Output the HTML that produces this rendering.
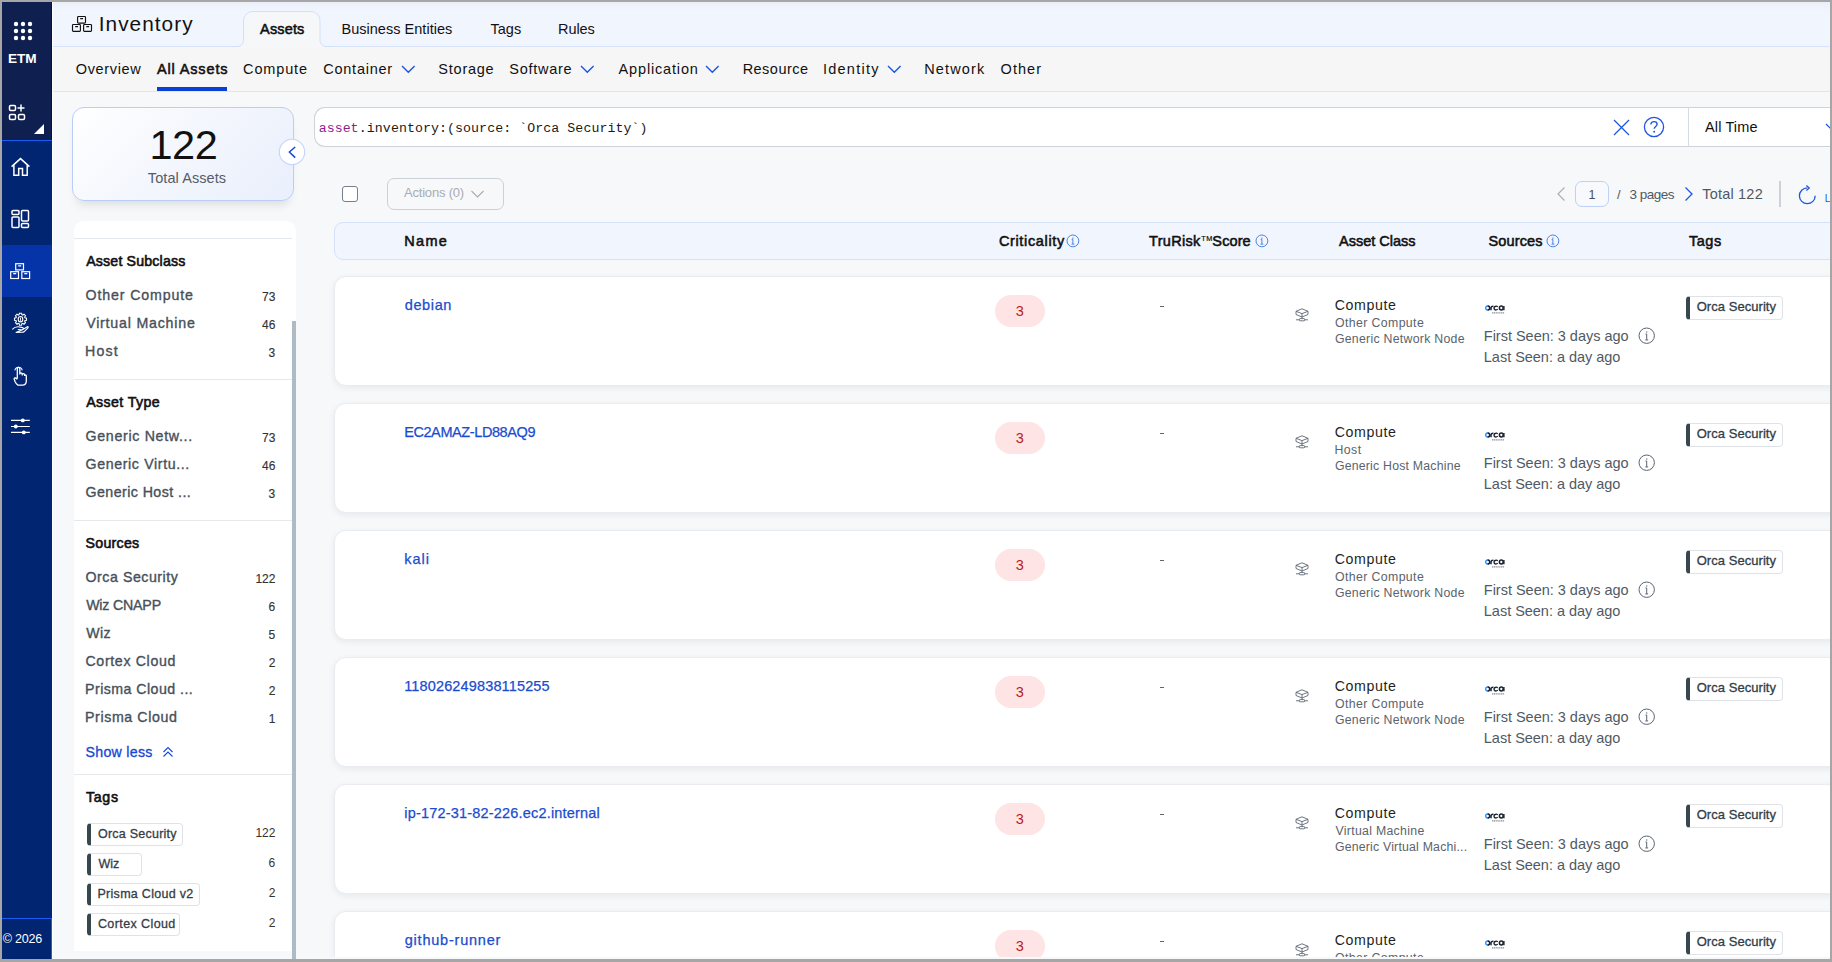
<!DOCTYPE html>
<html><head><meta charset="utf-8">
<style>
*{box-sizing:border-box;margin:0;padding:0}
html,body{width:1832px;height:962px;overflow:hidden}
body{background:#a6a6a6;font-family:"Liberation Sans",sans-serif;position:relative;color:#1a1a1a}
.a{position:absolute}
.t{position:absolute;white-space:nowrap;line-height:1}
svg{position:absolute;overflow:visible}
</style></head><body>
<div class="a" style="left:2px;top:2px;width:50px;height:957px;background:#012571"></div><div class="a" style="left:2px;top:2px;width:50px;height:138px;background:#0f1f4f"></div><div class="a" style="left:51px;top:2px;width:1px;height:138px;background:#001040"></div><div class="a" style="left:2px;top:140px;width:50px;height:1px;background:#1b5cf5"></div><div class="a" style="left:2px;top:245px;width:50px;height:52px;background:#0533a8"></div><div class="a" style="left:2px;top:918px;width:50px;height:1px;background:#1b5cf5"></div><div class="a" style="left:51px;top:918px;width:1px;height:41px;background:#1b5cf5"></div><div class="t" style="left:7.92px;top:52.49px;font-size:13.60px;color:#fff;font-weight:bold;letter-spacing:0.036px;">ETM</div><div class="t" style="left:2.81px;top:933.22px;font-size:12.50px;color:#fff;letter-spacing:-0.203px;">© 2026</div><svg style="left:0;top:0" width="52" height="960">
 <g fill="#fff">
  <circle cx="16" cy="24" r="2.2"/><circle cx="23" cy="24" r="2.2"/><circle cx="30" cy="24" r="2.2"/>
  <circle cx="16" cy="31" r="2.2"/><circle cx="23" cy="31" r="2.2"/><circle cx="30" cy="31" r="2.2"/>
  <circle cx="16" cy="38" r="2.2"/><circle cx="23" cy="38" r="2.2"/><circle cx="30" cy="38" r="2.2"/>
  <path d="M34 134 L44 124 L44 134 Z"/>
 </g>
 <g fill="none" stroke="#fff" stroke-width="1.5">
  <rect x="9.5" y="105.5" width="6" height="5" rx="1.2"/>
  <path d="M21 104.5 v7 M17.5 108 h7"/>
  <rect x="9.5" y="114.5" width="6" height="5" rx="1.2"/>
  <rect x="18.5" y="114.5" width="6" height="5" rx="1.2"/>
  <path d="M11.6 166.6 L20.5 158.6 L29.4 166.6 M13.9 164.6 V175.3 H18.7 V168.4 H22.5 V175.3 H27.2 V164.6"/>
  <rect x="12" y="210.5" width="7" height="4" rx="1"/>
  <rect x="12" y="217" width="7" height="10.5" rx="1"/>
  <rect x="21.5" y="210.5" width="7" height="10.5" rx="1"/>
  <rect x="21.5" y="223.5" width="7" height="4" rx="1"/>
  <rect x="15.7" y="263.7" width="7.8" height="6.2" stroke-width="1.2"/>
  <rect x="10.7" y="271.7" width="7.8" height="6.8" stroke-width="1.2"/>
  <rect x="21.8" y="271.7" width="7.8" height="6.8" stroke-width="1.2"/>
  <path d="M18.2 265.8 h3 M13.2 273.7 h3 M24.3 273.7 h3" stroke-width="1.2"/>
 </g>
</svg><div class="a" style="left:52px;top:2px;width:1px;height:957px;background:#fff"></div><div class="a" style="left:53px;top:2px;width:1777px;height:957px;background:#f6f8fa"></div><div class="a" style="left:53px;top:2px;width:1777px;height:44px;background:linear-gradient(#e9eef8 0px,#eef2fb 4px,#f1f5fe 10px)"></div><div class="a" style="left:53px;top:46px;width:1777px;height:1px;background:#d8e4fc"></div><div class="a" style="left:53px;top:47px;width:1777px;height:44px;background:#f6f6f6"></div><div class="a" style="left:53px;top:91px;width:1777px;height:1px;background:#e3e6e9"></div><svg style="left:0;top:0" width="340" height="50"><path d="M236 46.6 A6 6 0 0 0 243.5 40.5 V20.5 A9 9 0 0 1 252.5 11.5 H311 A9 9 0 0 1 320 20.5 V40.5 A6 6 0 0 0 327.5 46.6 V48 H236 Z" fill="#f6f7f9"/><path d="M232 46.5 H237.5 A6 6 0 0 0 243.5 40.5 V20.5 A9 9 0 0 1 252.5 11.5 H311 A9 9 0 0 1 320 20.5 V40.5 A6 6 0 0 0 326 46.5 H332" fill="none" stroke="#d3e0fb" stroke-width="1"/></svg><div class="t" style="left:98.73px;top:13.59px;font-size:20.80px;color:#111;letter-spacing:1.035px;">Inventory</div><div class="t" style="left:260.10px;top:21.83px;font-size:14.50px;color:#111;letter-spacing:0.142px;-webkit-text-stroke:0.55px #111;">Assets</div><div class="t" style="left:341.44px;top:21.83px;font-size:14.50px;color:#111;letter-spacing:0.028px;">Business Entities</div><div class="t" style="left:490.41px;top:21.83px;font-size:14.50px;color:#111;letter-spacing:0.034px;">Tags</div><div class="t" style="left:558.04px;top:21.83px;font-size:14.50px;color:#111;letter-spacing:-0.095px;">Rules</div><div class="t" style="left:75.75px;top:61.83px;font-size:14.50px;color:#111;letter-spacing:0.655px;">Overview</div><div class="t" style="left:157.00px;top:61.83px;font-size:14.50px;color:#111;letter-spacing:0.850px;-webkit-text-stroke:0.55px #111;">All Assets</div><div class="t" style="left:243.08px;top:61.83px;font-size:14.50px;color:#111;letter-spacing:0.847px;">Compute</div><div class="t" style="left:323.27px;top:61.83px;font-size:14.50px;color:#111;letter-spacing:0.748px;">Container</div><div class="t" style="left:438.35px;top:61.83px;font-size:14.50px;color:#111;letter-spacing:0.759px;">Storage</div><div class="t" style="left:509.35px;top:61.83px;font-size:14.50px;color:#111;letter-spacing:0.729px;">Software</div><div class="t" style="left:618.60px;top:61.83px;font-size:14.50px;color:#111;letter-spacing:0.834px;">Application</div><div class="t" style="left:742.64px;top:61.83px;font-size:14.50px;color:#111;letter-spacing:0.479px;">Resource</div><div class="t" style="left:823.00px;top:61.83px;font-size:14.50px;color:#111;letter-spacing:1.235px;">Identity</div><div class="t" style="left:924.14px;top:61.83px;font-size:14.50px;color:#111;letter-spacing:1.157px;">Network</div><div class="t" style="left:1000.55px;top:61.83px;font-size:14.50px;color:#111;letter-spacing:1.055px;">Other</div><div class="a" style="left:157px;top:87px;width:70px;height:4px;background:#0a3fd6"></div><div class="a" style="left:72px;top:107px;width:222px;height:94px;border:1px solid #b9cdf8;border-radius:12px;background:linear-gradient(135deg,#ffffff 0%,#f3f6fd 50%,#e9effc 100%);box-shadow:0 8px 10px -4px rgba(0,0,0,0.10)"></div><div class="t" style="left:149.39px;top:123.57px;font-size:41.50px;color:#111;letter-spacing:-0.355px;">122</div><div class="t" style="left:147.81px;top:170.53px;font-size:14.50px;color:#555c66;letter-spacing:0.085px;">Total Assets</div><svg style="left:278.8px;top:138.8px" width="26" height="26"><circle cx="13" cy="13" r="12.7" fill="#fff" stroke="#c2d5fc" stroke-width="1.1"/><path d="M16.2 8 L10.4 13 L16.2 18.6" fill="none" stroke="#1747d6" stroke-width="1.5"/></svg><div class="a" style="left:74px;top:221px;width:222px;height:730px;background:#fff;border-radius:10px 10px 0 0"></div><div class="a" style="left:74px;top:238px;width:218px;height:1px;background:#e3e8ef"></div><div class="a" style="left:292px;top:321px;width:4px;height:638px;background:#aebbc5"></div><div class="t" style="left:86.20px;top:253.68px;font-size:14.20px;color:#111;letter-spacing:0.165px;-webkit-text-stroke:0.6px #111;">Asset Subclass</div><div class="t" style="left:85.56px;top:287.68px;font-size:14.20px;color:#47505a;letter-spacing:0.860px;-webkit-text-stroke:0.35px #47505a;">Other Compute</div><div class="t" style="left:261.96px;top:290.54px;font-size:12.00px;color:#333;-webkit-text-stroke:0.15px #333;">73</div><div class="t" style="left:86.13px;top:315.78px;font-size:14.20px;color:#47505a;letter-spacing:0.799px;-webkit-text-stroke:0.35px #47505a;">Virtual Machine</div><div class="t" style="left:261.96px;top:318.64px;font-size:12.00px;color:#333;-webkit-text-stroke:0.15px #333;">46</div><div class="t" style="left:85.06px;top:343.98px;font-size:14.20px;color:#47505a;letter-spacing:1.175px;-webkit-text-stroke:0.35px #47505a;">Host</div><div class="t" style="left:268.62px;top:346.84px;font-size:12.00px;color:#333;-webkit-text-stroke:0.15px #333;">3</div><div class="a" style="left:74px;top:379px;width:218px;height:1px;background:#e6e8eb"></div><div class="t" style="left:86.20px;top:395.28px;font-size:14.20px;color:#111;letter-spacing:0.404px;-webkit-text-stroke:0.6px #111;">Asset Type</div><div class="t" style="left:85.49px;top:429.28px;font-size:14.20px;color:#47505a;letter-spacing:0.695px;-webkit-text-stroke:0.35px #47505a;">Generic Netw...</div><div class="t" style="left:261.96px;top:432.14px;font-size:12.00px;color:#333;-webkit-text-stroke:0.15px #333;">73</div><div class="t" style="left:85.49px;top:457.28px;font-size:14.20px;color:#47505a;letter-spacing:0.631px;-webkit-text-stroke:0.35px #47505a;">Generic Virtu...</div><div class="t" style="left:261.96px;top:460.14px;font-size:12.00px;color:#333;-webkit-text-stroke:0.15px #333;">46</div><div class="t" style="left:85.49px;top:485.28px;font-size:14.20px;color:#47505a;letter-spacing:0.445px;-webkit-text-stroke:0.35px #47505a;">Generic Host ...</div><div class="t" style="left:268.62px;top:488.14px;font-size:12.00px;color:#333;-webkit-text-stroke:0.15px #333;">3</div><div class="a" style="left:74px;top:520px;width:218px;height:1px;background:#e6e8eb"></div><div class="t" style="left:85.56px;top:535.58px;font-size:14.20px;color:#111;letter-spacing:0.254px;-webkit-text-stroke:0.6px #111;">Sources</div><div class="t" style="left:85.56px;top:569.98px;font-size:14.20px;color:#47505a;letter-spacing:0.530px;-webkit-text-stroke:0.35px #47505a;">Orca Security</div><div class="t" style="left:255.42px;top:572.84px;font-size:12.00px;color:#333;-webkit-text-stroke:0.15px #333;">122</div><div class="t" style="left:86.13px;top:597.98px;font-size:14.20px;color:#47505a;letter-spacing:-0.186px;-webkit-text-stroke:0.35px #47505a;">Wiz CNAPP</div><div class="t" style="left:268.62px;top:600.84px;font-size:12.00px;color:#333;-webkit-text-stroke:0.15px #333;">6</div><div class="t" style="left:86.13px;top:625.98px;font-size:14.20px;color:#47505a;letter-spacing:0.469px;-webkit-text-stroke:0.35px #47505a;">Wiz</div><div class="t" style="left:268.62px;top:628.84px;font-size:12.00px;color:#333;-webkit-text-stroke:0.15px #333;">5</div><div class="t" style="left:85.49px;top:653.98px;font-size:14.20px;color:#47505a;letter-spacing:0.643px;-webkit-text-stroke:0.35px #47505a;">Cortex Cloud</div><div class="t" style="left:268.74px;top:656.84px;font-size:12.00px;color:#333;-webkit-text-stroke:0.15px #333;">2</div><div class="t" style="left:85.06px;top:681.98px;font-size:14.20px;color:#47505a;letter-spacing:0.450px;-webkit-text-stroke:0.35px #47505a;">Prisma Cloud ...</div><div class="t" style="left:268.74px;top:684.84px;font-size:12.00px;color:#333;-webkit-text-stroke:0.15px #333;">2</div><div class="t" style="left:85.06px;top:709.98px;font-size:14.20px;color:#47505a;letter-spacing:0.605px;-webkit-text-stroke:0.35px #47505a;">Prisma Cloud</div><div class="t" style="left:268.68px;top:712.84px;font-size:12.00px;color:#333;-webkit-text-stroke:0.15px #333;">1</div><div class="t" style="left:85.56px;top:745.08px;font-size:14.20px;color:#1747d6;letter-spacing:0.273px;-webkit-text-stroke:0.3px #1747d6;">Show less</div><svg style="left:162px;top:746px" width="12" height="12"><path d="M1.5 6 L6 1.5 L10.5 6 M1.5 10.5 L6 6 L10.5 10.5" fill="none" stroke="#1747d6" stroke-width="1.1"/></svg><div class="a" style="left:74px;top:774px;width:218px;height:1px;background:#e6e8eb"></div><div class="t" style="left:85.92px;top:790.28px;font-size:14.20px;color:#111;letter-spacing:0.740px;-webkit-text-stroke:0.6px #111;">Tags</div><div class="a" style="left:86.8px;top:823px;width:96.2px;height:23px;background:#fff;border:1px solid #dfe3e8;border-left:4px solid #37474f;border-radius:4px"></div><div class="t" style="left:97.94px;top:827.62px;font-size:12.50px;color:#333d47;letter-spacing:0.240px;-webkit-text-stroke:0.3px #333d47;">Orca Security</div><div class="t" style="left:255.42px;top:826.84px;font-size:12.00px;color:#333;">122</div><div class="a" style="left:86.8px;top:853px;width:55.500000000000014px;height:23px;background:#fff;border:1px solid #dfe3e8;border-left:4px solid #37474f;border-radius:4px"></div><div class="t" style="left:98.44px;top:857.62px;font-size:12.50px;color:#333d47;letter-spacing:-0.062px;-webkit-text-stroke:0.3px #333d47;">Wiz</div><div class="t" style="left:268.62px;top:856.84px;font-size:12.00px;color:#333;">6</div><div class="a" style="left:86.8px;top:883px;width:112.8px;height:23px;background:#fff;border:1px solid #dfe3e8;border-left:4px solid #37474f;border-radius:4px"></div><div class="t" style="left:97.50px;top:887.62px;font-size:12.50px;color:#333d47;letter-spacing:0.281px;-webkit-text-stroke:0.3px #333d47;">Prisma Cloud v2</div><div class="t" style="left:268.74px;top:886.84px;font-size:12.00px;color:#333;">2</div><div class="a" style="left:86.8px;top:913px;width:93.7px;height:23px;background:#fff;border:1px solid #dfe3e8;border-left:4px solid #37474f;border-radius:4px"></div><div class="t" style="left:97.88px;top:917.62px;font-size:12.50px;color:#333d47;letter-spacing:0.409px;-webkit-text-stroke:0.3px #333d47;">Cortex Cloud</div><div class="t" style="left:268.74px;top:916.84px;font-size:12.00px;color:#333;">2</div><div class="a" style="left:314px;top:107px;width:1530px;height:40px;background:#fff;border:1px solid #cdd3da;border-right:none;border-radius:11px 0 0 11px"></div><div class="a" style="left:1688px;top:108px;width:1px;height:38px;background:#d6dbe1"></div><div class="t" style="left:318.81px;top:122.14px;font-size:13.25px;color:#8a1d8f;font-family:'Liberation Mono', monospace;">asset</div><div class="t" style="left:358.80px;top:122.14px;font-size:13.25px;color:#1a1a1a;font-family:'Liberation Mono',monospace;letter-spacing:0.070px">.inventory:(source: `Orca Security`)</div><svg style="left:1613px;top:119px" width="17" height="17"><path d="M1 1 L16 16 M16 1 L1 16" stroke="#1f55e0" stroke-width="1.3" fill="none"/></svg><svg style="left:1643px;top:116px" width="22" height="22"><circle cx="11" cy="11" r="9.6" fill="none" stroke="#1f55e0" stroke-width="1.3"/><path d="M7.9 8.6 C7.9 6.6 9.3 5.6 11 5.6 C12.8 5.6 14.1 6.7 14.1 8.3 C14.1 10.3 11.2 10.6 11.2 12.8" fill="none" stroke="#1f55e0" stroke-width="1.4"/><circle cx="11.2" cy="15.8" r="0.95" fill="#1f55e0"/></svg><div class="t" style="left:1705.00px;top:119.63px;font-size:14.50px;color:#111;letter-spacing:0.129px;">All Time</div><svg style="left:1825px;top:122px" width="12" height="10"><path d="M1 2 L6 7 L11 2" stroke="#1f55e0" stroke-width="1.2" fill="none"/></svg><div class="a" style="left:342px;top:186px;width:16px;height:16px;background:#fff;border:1px solid #74808d;border-radius:3px"></div><div class="a" style="left:387px;top:178px;width:117px;height:32px;border:1px solid #cad1d9;border-radius:7px;background:#f7f8fa"></div><div class="t" style="left:404.00px;top:186.20px;font-size:13.00px;color:#a6adb5;letter-spacing:-0.200px;">Actions (0)</div><svg style="left:470px;top:189px" width="16" height="10"><path d="M1.5 2 L7.5 8 L13.5 2" stroke="#a3adb7" stroke-width="1.1" fill="none"/></svg><svg style="left:1554px;top:186px" width="14" height="16"><path d="M10.5 1.5 L4 8 L10.5 14.5" stroke="#a9b0b8" stroke-width="1.2" fill="none"/></svg><div class="a" style="left:1575px;top:181px;width:34px;height:26px;border:1px solid #bcd0f8;border-radius:7px;background:#f7f9fd"></div><div class="t" style="left:1588.56px;top:188.52px;font-size:12.50px;color:#4a4f55;">1</div><div class="t" style="left:1617.00px;top:188.10px;font-size:13.00px;color:#555;">/</div><div class="t" style="left:1629.46px;top:187.67px;font-size:13.50px;color:#4f5863;letter-spacing:-0.508px;">3 pages</div><svg style="left:1682px;top:186px" width="14" height="16"><path d="M3.5 1.5 L10 8 L3.5 14.5" stroke="#1f55e0" stroke-width="1.3" fill="none"/></svg><div class="t" style="left:1702.31px;top:186.83px;font-size:14.50px;color:#4f5863;letter-spacing:0.193px;">Total 122</div><div class="a" style="left:1779px;top:181px;width:2px;height:26px;background:#ccd2d9"></div><svg style="left:1797px;top:185px" width="22" height="22"><path d="M18.2 10.8 A7.9 7.9 0 1 1 10.3 2.9" fill="none" stroke="#1f55e0" stroke-width="1.3"/><path d="M9.4 0.4 L12.2 3 L9.4 5.6" fill="none" stroke="#1f55e0" stroke-width="1.3"/></svg><div class="t" style="left:1824.70px;top:193.73px;font-size:10.00px;color:#1f55e0;">L</div><div class="a" style="left:334px;top:222px;width:1600px;height:38px;background:#f1f5fd;border:1px solid #d6e2fb;border-radius:9px"></div><div class="t" style="left:404.34px;top:233.63px;font-size:14.50px;color:#111;letter-spacing:1.257px;-webkit-text-stroke:0.55px #111;">Name</div><div class="t" style="left:998.88px;top:233.73px;font-size:14.50px;color:#111;letter-spacing:0.653px;-webkit-text-stroke:0.55px #111;">Criticality</div><div class="t" style="left:1149.01px;top:233.73px;font-size:14.50px;color:#111;letter-spacing:0.320px;-webkit-text-stroke:0.55px #111;">TruRisk</div><div class="t" style="left:1201.35px;top:235.22px;font-size:7.30px;color:#111;letter-spacing:0.518px;-webkit-text-stroke:0.2px #111;">TM</div><div class="t" style="left:1212.35px;top:233.73px;font-size:14.50px;color:#111;letter-spacing:0.115px;-webkit-text-stroke:0.55px #111;">Score</div><div class="t" style="left:1339.00px;top:233.73px;font-size:14.50px;color:#111;-webkit-text-stroke:0.55px #111;">Asset Class</div><div class="t" style="left:1488.55px;top:233.73px;font-size:14.50px;color:#111;letter-spacing:0.124px;-webkit-text-stroke:0.55px #111;">Sources</div><div class="t" style="left:1689.11px;top:233.73px;font-size:14.50px;color:#111;letter-spacing:0.467px;-webkit-text-stroke:0.55px #111;">Tags</div><svg style="left:1065.1px;top:232.8px" width="15" height="15"><circle cx="7.9" cy="7.9" r="5.9" fill="none" stroke="#3a78e0" stroke-width="0.9"/><rect x="7.30" y="4.65" width="1.20" height="1.10" fill="#3a78e0"/><path d="M6.70 6.60 h1.20 v4.43 M6.50 11.15 h2.80" stroke="#3a78e0" stroke-width="0.90" fill="none"/></svg><svg style="left:1253.6px;top:232.8px" width="15" height="15"><circle cx="7.9" cy="7.9" r="5.9" fill="none" stroke="#3a78e0" stroke-width="0.9"/><rect x="7.30" y="4.65" width="1.20" height="1.10" fill="#3a78e0"/><path d="M6.70 6.60 h1.20 v4.43 M6.50 11.15 h2.80" stroke="#3a78e0" stroke-width="0.90" fill="none"/></svg><svg style="left:1545.1px;top:232.8px" width="15" height="15"><circle cx="7.9" cy="7.9" r="5.9" fill="none" stroke="#3a78e0" stroke-width="0.9"/><rect x="7.30" y="4.65" width="1.20" height="1.10" fill="#3a78e0"/><path d="M6.70 6.60 h1.20 v4.43 M6.50 11.15 h2.80" stroke="#3a78e0" stroke-width="0.90" fill="none"/></svg><svg style="left:0;top:0" width="100" height="40"><g fill="none" stroke="#111" stroke-width="1.15"><rect x="77.6" y="16.5" width="7.9" height="6.6" rx="0.8"/><rect x="72.5" y="24.5" width="7.9" height="6.9" rx="0.8"/><rect x="83.6" y="24.5" width="7.9" height="6.9" rx="0.8"/><path d="M80.2 18.6 h2.8 M75.2 26.6 h2.8 M86.3 26.6 h2.8"/></g></svg><svg style="left:400.5px;top:62px" width="16" height="14"><path d="M1 4 L7.3 10.3 L13.6 4" fill="none" stroke="#1c55e8" stroke-width="1.4"/></svg><svg style="left:580.0px;top:62px" width="16" height="14"><path d="M1 4 L7.3 10.3 L13.6 4" fill="none" stroke="#1c55e8" stroke-width="1.4"/></svg><svg style="left:705.4px;top:62px" width="16" height="14"><path d="M1 4 L7.3 10.3 L13.6 4" fill="none" stroke="#1c55e8" stroke-width="1.4"/></svg><svg style="left:887.0px;top:62px" width="16" height="14"><path d="M1 4 L7.3 10.3 L13.6 4" fill="none" stroke="#1c55e8" stroke-width="1.4"/></svg><svg style="left:0;top:0" width="52" height="450"><g fill="none" stroke="#fff" stroke-width="1.3">
<path d="M19.13 314.71 L19.44 313.19 L21.56 313.19 L21.87 314.71 L22.71 315.05 L24.00 314.20 L25.50 315.70 L24.65 316.99 L24.99 317.83 L26.51 318.14 L26.51 320.26 L24.99 320.57 L24.65 321.41 L25.50 322.70 L24.00 324.20 L22.71 323.35 L21.87 323.69 L21.56 325.21 L19.44 325.21 L19.13 323.69 L18.29 323.35 L17.00 324.20 L15.50 322.70 L16.35 321.41 L16.01 320.57 L14.49 320.26 L14.49 318.14 L16.01 317.83 L16.35 316.99 L15.50 315.70 L17.00 314.20 L18.29 315.05 Z" stroke-width="1.1"/>
<ellipse cx="20.5" cy="319.2" rx="2.3" ry="2.7" stroke-width="1.1"/><path d="M20.5 317.6 V320.8" stroke-width="0.9"/>
<path d="M12.3 329.4 Q14.8 326.6 18.5 326.8 L22.5 327.6 Q23.6 328 23.2 329 Q22.8 329.8 21.2 329.7 L17.8 329.5 M22.5 329.7 L27.6 326.6 Q28.6 326.8 27.9 328 L24 331.8 Q23.3 332.3 22 332.3 L15.8 332.4 Z" stroke-width="1.1"/>
<path d="M14.9 370.3 A3.7 3.7 0 0 1 22.2 370.3" stroke-width="1.1"/>
<path d="M17.3 378.5 V368.8 Q17.3 367.4 18.55 367.4 Q19.8 367.4 19.8 368.8 V374.5 M19.8 374 Q19.8 372.9 21 372.9 Q22.2 372.9 22.2 374 V375.5 M22.2 374.6 Q22.2 373.6 23.4 373.6 Q24.6 373.6 24.6 374.8 V376 M24.6 375.6 Q24.6 374.8 25.45 374.8 Q26.3 374.8 26.3 375.8 V381 Q26.3 385 22.5 385.2 H18 Q16 383.8 15 381.5 L14.2 379 Q14 377.6 15.5 377.9 L17.3 379.2"/>
</g>
<g stroke="#fff" stroke-width="1.1"><path d="M11 420.4 H29.8 M11 426.5 H29.8 M11 432.4 H29.8"/></g>
<g fill="#fff"><circle cx="22.8" cy="420.4" r="1.95"/><circle cx="15.8" cy="426.5" r="1.95"/><circle cx="23.8" cy="432.4" r="1.95"/></g>
</svg><div class="a" style="left:334px;top:276px;width:1600px;height:110px;background:#fff;border:1px solid #e9ecf0;border-radius:12px;box-shadow:0 2px 6px rgba(30,40,60,0.07)"></div><div class="t" style="left:404.72px;top:297.73px;font-size:14.50px;color:#1a4ccf;letter-spacing:0.625px;-webkit-text-stroke:0.25px #1a4ccf;">debian</div><div class="a" style="left:995px;top:295px;width:50px;height:32px;background:#fee4e4;border-radius:16px"></div><div class="t" style="left:1015.82px;top:303.73px;font-size:14.50px;color:#b81d18;">3</div><div class="a" style="left:1159.5px;top:305.6px;width:4px;height:1.2px;background:#666"></div><svg style="left:1295px;top:308px" width="16" height="16"><g fill="none" stroke="#5d6672" stroke-width="0.9"><path d="M7 0.8 L13 3.3 L13 6.5 L7 9 L1 6.5 L1 3.3 Z M1 3.3 L7 5.6 L13 3.3 M7 5.6 V10.5"/><path d="M1 11.8 H4.5 M9.5 11.8 H13"/><rect x="4.3" y="10.6" width="5.4" height="2.2" rx="0.8"/></g></svg><div class="t" style="left:1334.79px;top:298.18px;font-size:14.20px;color:#1d1f22;letter-spacing:0.595px;">Compute</div><div class="t" style="left:1334.95px;top:316.79px;font-size:12.30px;color:#5b636c;letter-spacing:0.395px;">Other Compute</div><div class="t" style="left:1334.88px;top:332.69px;font-size:12.30px;color:#5b636c;letter-spacing:0.277px;">Generic Network Node</div><svg style="left:1485px;top:305px" width="22" height="12"><circle cx="2.7" cy="3" r="2" fill="none" stroke="#2f8af5" stroke-width="1.4"/><path d="M2.7 1 A2 2 0 0 1 2.7 5" fill="none" stroke="#1b2230" stroke-width="1.4"/><path d="M6 5.2 V2.4 Q6.5 1 8.4 1.2" fill="none" stroke="#1b2230" stroke-width="1.5"/><path d="M12.8 1.7 Q11.8 1 10.8 1.2 Q9 1.5 9 3 Q9 4.8 10.8 5 Q11.8 5 12.8 4.3" fill="none" stroke="#1b2230" stroke-width="1.4"/><circle cx="16.3" cy="3" r="1.9" fill="none" stroke="#1b2230" stroke-width="1.5"/><path d="M18.9 1 V5.3" stroke="#1b2230" stroke-width="1.4"/><path d="M7 7.8 H19.5" stroke="#8a9098" stroke-width="1.3" stroke-dasharray="1.3 0.5"/></svg><div class="t" style="left:1483.84px;top:328.73px;font-size:14.50px;color:#515a64;letter-spacing:-0.016px;">First Seen: 3 days ago</div><svg style="left:1636.7px;top:326.3px" width="19" height="19"><circle cx="9.7" cy="9.7" r="7.7" fill="none" stroke="#5a6370" stroke-width="1"/><rect x="9.10" y="5.46" width="1.20" height="1.10" fill="#5a6370"/><path d="M8.50 8.01 h1.20 v5.78 M8.30 13.93 h2.80" stroke="#5a6370" stroke-width="1.00" fill="none"/></svg><div class="t" style="left:1483.84px;top:349.73px;font-size:14.50px;color:#515a64;letter-spacing:-0.026px;">Last Seen: a day ago</div><div class="a" style="left:1686px;top:296px;width:97px;height:24px;background:#fff;border:1px solid #dfe3e8;border-left:4px solid #37474f;border-radius:4px"></div><div class="t" style="left:1696.71px;top:300.30px;font-size:13.00px;color:#333d47;letter-spacing:0.047px;-webkit-text-stroke:0.3px #333d47;">Orca Security</div><div class="a" style="left:334px;top:403px;width:1600px;height:110px;background:#fff;border:1px solid #e9ecf0;border-radius:12px;box-shadow:0 2px 6px rgba(30,40,60,0.07)"></div><div class="t" style="left:404.14px;top:424.73px;font-size:14.50px;color:#1a4ccf;letter-spacing:-0.403px;-webkit-text-stroke:0.25px #1a4ccf;">EC2AMAZ-LD88AQ9</div><div class="a" style="left:995px;top:422px;width:50px;height:32px;background:#fee4e4;border-radius:16px"></div><div class="t" style="left:1015.82px;top:430.73px;font-size:14.50px;color:#b81d18;">3</div><div class="a" style="left:1159.5px;top:432.6px;width:4px;height:1.2px;background:#666"></div><svg style="left:1295px;top:435px" width="16" height="16"><g fill="none" stroke="#5d6672" stroke-width="0.9"><path d="M7 0.8 L13 3.3 L13 6.5 L7 9 L1 6.5 L1 3.3 Z M1 3.3 L7 5.6 L13 3.3 M7 5.6 V10.5"/><path d="M1 11.8 H4.5 M9.5 11.8 H13"/><rect x="4.3" y="10.6" width="5.4" height="2.2" rx="0.8"/></g></svg><div class="t" style="left:1334.79px;top:425.18px;font-size:14.20px;color:#1d1f22;letter-spacing:0.595px;">Compute</div><div class="t" style="left:1334.52px;top:443.79px;font-size:12.30px;color:#5b636c;letter-spacing:0.423px;">Host</div><div class="t" style="left:1334.88px;top:459.69px;font-size:12.30px;color:#5b636c;letter-spacing:0.212px;">Generic Host Machine</div><svg style="left:1485px;top:432px" width="22" height="12"><circle cx="2.7" cy="3" r="2" fill="none" stroke="#2f8af5" stroke-width="1.4"/><path d="M2.7 1 A2 2 0 0 1 2.7 5" fill="none" stroke="#1b2230" stroke-width="1.4"/><path d="M6 5.2 V2.4 Q6.5 1 8.4 1.2" fill="none" stroke="#1b2230" stroke-width="1.5"/><path d="M12.8 1.7 Q11.8 1 10.8 1.2 Q9 1.5 9 3 Q9 4.8 10.8 5 Q11.8 5 12.8 4.3" fill="none" stroke="#1b2230" stroke-width="1.4"/><circle cx="16.3" cy="3" r="1.9" fill="none" stroke="#1b2230" stroke-width="1.5"/><path d="M18.9 1 V5.3" stroke="#1b2230" stroke-width="1.4"/><path d="M7 7.8 H19.5" stroke="#8a9098" stroke-width="1.3" stroke-dasharray="1.3 0.5"/></svg><div class="t" style="left:1483.84px;top:455.73px;font-size:14.50px;color:#515a64;letter-spacing:-0.016px;">First Seen: 3 days ago</div><svg style="left:1636.7px;top:453.3px" width="19" height="19"><circle cx="9.7" cy="9.7" r="7.7" fill="none" stroke="#5a6370" stroke-width="1"/><rect x="9.10" y="5.46" width="1.20" height="1.10" fill="#5a6370"/><path d="M8.50 8.01 h1.20 v5.78 M8.30 13.93 h2.80" stroke="#5a6370" stroke-width="1.00" fill="none"/></svg><div class="t" style="left:1483.84px;top:476.73px;font-size:14.50px;color:#515a64;letter-spacing:-0.026px;">Last Seen: a day ago</div><div class="a" style="left:1686px;top:423px;width:97px;height:24px;background:#fff;border:1px solid #dfe3e8;border-left:4px solid #37474f;border-radius:4px"></div><div class="t" style="left:1696.71px;top:427.30px;font-size:13.00px;color:#333d47;letter-spacing:0.047px;-webkit-text-stroke:0.3px #333d47;">Orca Security</div><div class="a" style="left:334px;top:530px;width:1600px;height:110px;background:#fff;border:1px solid #e9ecf0;border-radius:12px;box-shadow:0 2px 6px rgba(30,40,60,0.07)"></div><div class="t" style="left:404.36px;top:551.73px;font-size:14.50px;color:#1a4ccf;letter-spacing:0.945px;-webkit-text-stroke:0.25px #1a4ccf;">kali</div><div class="a" style="left:995px;top:549px;width:50px;height:32px;background:#fee4e4;border-radius:16px"></div><div class="t" style="left:1015.82px;top:557.73px;font-size:14.50px;color:#b81d18;">3</div><div class="a" style="left:1159.5px;top:559.6px;width:4px;height:1.2px;background:#666"></div><svg style="left:1295px;top:562px" width="16" height="16"><g fill="none" stroke="#5d6672" stroke-width="0.9"><path d="M7 0.8 L13 3.3 L13 6.5 L7 9 L1 6.5 L1 3.3 Z M1 3.3 L7 5.6 L13 3.3 M7 5.6 V10.5"/><path d="M1 11.8 H4.5 M9.5 11.8 H13"/><rect x="4.3" y="10.6" width="5.4" height="2.2" rx="0.8"/></g></svg><div class="t" style="left:1334.79px;top:552.18px;font-size:14.20px;color:#1d1f22;letter-spacing:0.595px;">Compute</div><div class="t" style="left:1334.95px;top:570.79px;font-size:12.30px;color:#5b636c;letter-spacing:0.395px;">Other Compute</div><div class="t" style="left:1334.88px;top:586.69px;font-size:12.30px;color:#5b636c;letter-spacing:0.277px;">Generic Network Node</div><svg style="left:1485px;top:559px" width="22" height="12"><circle cx="2.7" cy="3" r="2" fill="none" stroke="#2f8af5" stroke-width="1.4"/><path d="M2.7 1 A2 2 0 0 1 2.7 5" fill="none" stroke="#1b2230" stroke-width="1.4"/><path d="M6 5.2 V2.4 Q6.5 1 8.4 1.2" fill="none" stroke="#1b2230" stroke-width="1.5"/><path d="M12.8 1.7 Q11.8 1 10.8 1.2 Q9 1.5 9 3 Q9 4.8 10.8 5 Q11.8 5 12.8 4.3" fill="none" stroke="#1b2230" stroke-width="1.4"/><circle cx="16.3" cy="3" r="1.9" fill="none" stroke="#1b2230" stroke-width="1.5"/><path d="M18.9 1 V5.3" stroke="#1b2230" stroke-width="1.4"/><path d="M7 7.8 H19.5" stroke="#8a9098" stroke-width="1.3" stroke-dasharray="1.3 0.5"/></svg><div class="t" style="left:1483.84px;top:582.73px;font-size:14.50px;color:#515a64;letter-spacing:-0.016px;">First Seen: 3 days ago</div><svg style="left:1636.7px;top:580.3px" width="19" height="19"><circle cx="9.7" cy="9.7" r="7.7" fill="none" stroke="#5a6370" stroke-width="1"/><rect x="9.10" y="5.46" width="1.20" height="1.10" fill="#5a6370"/><path d="M8.50 8.01 h1.20 v5.78 M8.30 13.93 h2.80" stroke="#5a6370" stroke-width="1.00" fill="none"/></svg><div class="t" style="left:1483.84px;top:603.73px;font-size:14.50px;color:#515a64;letter-spacing:-0.026px;">Last Seen: a day ago</div><div class="a" style="left:1686px;top:550px;width:97px;height:24px;background:#fff;border:1px solid #dfe3e8;border-left:4px solid #37474f;border-radius:4px"></div><div class="t" style="left:1696.71px;top:554.30px;font-size:13.00px;color:#333d47;letter-spacing:0.047px;-webkit-text-stroke:0.3px #333d47;">Orca Security</div><div class="a" style="left:334px;top:657px;width:1600px;height:110px;background:#fff;border:1px solid #e9ecf0;border-radius:12px;box-shadow:0 2px 6px rgba(30,40,60,0.07)"></div><div class="t" style="left:404.21px;top:678.73px;font-size:14.50px;color:#1a4ccf;letter-spacing:0.141px;-webkit-text-stroke:0.25px #1a4ccf;">118026249838115255</div><div class="a" style="left:995px;top:676px;width:50px;height:32px;background:#fee4e4;border-radius:16px"></div><div class="t" style="left:1015.82px;top:684.73px;font-size:14.50px;color:#b81d18;">3</div><div class="a" style="left:1159.5px;top:686.6px;width:4px;height:1.2px;background:#666"></div><svg style="left:1295px;top:689px" width="16" height="16"><g fill="none" stroke="#5d6672" stroke-width="0.9"><path d="M7 0.8 L13 3.3 L13 6.5 L7 9 L1 6.5 L1 3.3 Z M1 3.3 L7 5.6 L13 3.3 M7 5.6 V10.5"/><path d="M1 11.8 H4.5 M9.5 11.8 H13"/><rect x="4.3" y="10.6" width="5.4" height="2.2" rx="0.8"/></g></svg><div class="t" style="left:1334.79px;top:679.18px;font-size:14.20px;color:#1d1f22;letter-spacing:0.595px;">Compute</div><div class="t" style="left:1334.95px;top:697.79px;font-size:12.30px;color:#5b636c;letter-spacing:0.395px;">Other Compute</div><div class="t" style="left:1334.88px;top:713.69px;font-size:12.30px;color:#5b636c;letter-spacing:0.277px;">Generic Network Node</div><svg style="left:1485px;top:686px" width="22" height="12"><circle cx="2.7" cy="3" r="2" fill="none" stroke="#2f8af5" stroke-width="1.4"/><path d="M2.7 1 A2 2 0 0 1 2.7 5" fill="none" stroke="#1b2230" stroke-width="1.4"/><path d="M6 5.2 V2.4 Q6.5 1 8.4 1.2" fill="none" stroke="#1b2230" stroke-width="1.5"/><path d="M12.8 1.7 Q11.8 1 10.8 1.2 Q9 1.5 9 3 Q9 4.8 10.8 5 Q11.8 5 12.8 4.3" fill="none" stroke="#1b2230" stroke-width="1.4"/><circle cx="16.3" cy="3" r="1.9" fill="none" stroke="#1b2230" stroke-width="1.5"/><path d="M18.9 1 V5.3" stroke="#1b2230" stroke-width="1.4"/><path d="M7 7.8 H19.5" stroke="#8a9098" stroke-width="1.3" stroke-dasharray="1.3 0.5"/></svg><div class="t" style="left:1483.84px;top:709.73px;font-size:14.50px;color:#515a64;letter-spacing:-0.016px;">First Seen: 3 days ago</div><svg style="left:1636.7px;top:707.3px" width="19" height="19"><circle cx="9.7" cy="9.7" r="7.7" fill="none" stroke="#5a6370" stroke-width="1"/><rect x="9.10" y="5.46" width="1.20" height="1.10" fill="#5a6370"/><path d="M8.50 8.01 h1.20 v5.78 M8.30 13.93 h2.80" stroke="#5a6370" stroke-width="1.00" fill="none"/></svg><div class="t" style="left:1483.84px;top:730.73px;font-size:14.50px;color:#515a64;letter-spacing:-0.026px;">Last Seen: a day ago</div><div class="a" style="left:1686px;top:677px;width:97px;height:24px;background:#fff;border:1px solid #dfe3e8;border-left:4px solid #37474f;border-radius:4px"></div><div class="t" style="left:1696.71px;top:681.30px;font-size:13.00px;color:#333d47;letter-spacing:0.047px;-webkit-text-stroke:0.3px #333d47;">Orca Security</div><div class="a" style="left:334px;top:784px;width:1600px;height:110px;background:#fff;border:1px solid #e9ecf0;border-radius:12px;box-shadow:0 2px 6px rgba(30,40,60,0.07)"></div><div class="t" style="left:404.36px;top:805.73px;font-size:14.50px;color:#1a4ccf;letter-spacing:0.184px;-webkit-text-stroke:0.25px #1a4ccf;">ip-172-31-82-226.ec2.internal</div><div class="a" style="left:995px;top:803px;width:50px;height:32px;background:#fee4e4;border-radius:16px"></div><div class="t" style="left:1015.82px;top:811.73px;font-size:14.50px;color:#b81d18;">3</div><div class="a" style="left:1159.5px;top:813.6px;width:4px;height:1.2px;background:#666"></div><svg style="left:1295px;top:816px" width="16" height="16"><g fill="none" stroke="#5d6672" stroke-width="0.9"><path d="M7 0.8 L13 3.3 L13 6.5 L7 9 L1 6.5 L1 3.3 Z M1 3.3 L7 5.6 L13 3.3 M7 5.6 V10.5"/><path d="M1 11.8 H4.5 M9.5 11.8 H13"/><rect x="4.3" y="10.6" width="5.4" height="2.2" rx="0.8"/></g></svg><div class="t" style="left:1334.79px;top:806.18px;font-size:14.20px;color:#1d1f22;letter-spacing:0.595px;">Compute</div><div class="t" style="left:1335.44px;top:824.79px;font-size:12.30px;color:#5b636c;letter-spacing:0.304px;">Virtual Machine</div><div class="t" style="left:1334.88px;top:840.69px;font-size:12.30px;color:#5b636c;letter-spacing:0.203px;">Generic Virtual Machi...</div><svg style="left:1485px;top:813px" width="22" height="12"><circle cx="2.7" cy="3" r="2" fill="none" stroke="#2f8af5" stroke-width="1.4"/><path d="M2.7 1 A2 2 0 0 1 2.7 5" fill="none" stroke="#1b2230" stroke-width="1.4"/><path d="M6 5.2 V2.4 Q6.5 1 8.4 1.2" fill="none" stroke="#1b2230" stroke-width="1.5"/><path d="M12.8 1.7 Q11.8 1 10.8 1.2 Q9 1.5 9 3 Q9 4.8 10.8 5 Q11.8 5 12.8 4.3" fill="none" stroke="#1b2230" stroke-width="1.4"/><circle cx="16.3" cy="3" r="1.9" fill="none" stroke="#1b2230" stroke-width="1.5"/><path d="M18.9 1 V5.3" stroke="#1b2230" stroke-width="1.4"/><path d="M7 7.8 H19.5" stroke="#8a9098" stroke-width="1.3" stroke-dasharray="1.3 0.5"/></svg><div class="t" style="left:1483.84px;top:836.73px;font-size:14.50px;color:#515a64;letter-spacing:-0.016px;">First Seen: 3 days ago</div><svg style="left:1636.7px;top:834.3px" width="19" height="19"><circle cx="9.7" cy="9.7" r="7.7" fill="none" stroke="#5a6370" stroke-width="1"/><rect x="9.10" y="5.46" width="1.20" height="1.10" fill="#5a6370"/><path d="M8.50 8.01 h1.20 v5.78 M8.30 13.93 h2.80" stroke="#5a6370" stroke-width="1.00" fill="none"/></svg><div class="t" style="left:1483.84px;top:857.73px;font-size:14.50px;color:#515a64;letter-spacing:-0.026px;">Last Seen: a day ago</div><div class="a" style="left:1686px;top:804px;width:97px;height:24px;background:#fff;border:1px solid #dfe3e8;border-left:4px solid #37474f;border-radius:4px"></div><div class="t" style="left:1696.71px;top:808.30px;font-size:13.00px;color:#333d47;letter-spacing:0.047px;-webkit-text-stroke:0.3px #333d47;">Orca Security</div><div class="a" style="left:334px;top:911px;width:1600px;height:110px;background:#fff;border:1px solid #e9ecf0;border-radius:12px;box-shadow:0 2px 6px rgba(30,40,60,0.07)"></div><div class="t" style="left:404.72px;top:932.73px;font-size:14.50px;color:#1a4ccf;letter-spacing:0.783px;-webkit-text-stroke:0.25px #1a4ccf;">github-runner</div><div class="a" style="left:995px;top:930px;width:50px;height:32px;background:#fee4e4;border-radius:16px"></div><div class="t" style="left:1015.82px;top:938.73px;font-size:14.50px;color:#b81d18;">3</div><div class="a" style="left:1159.5px;top:940.6px;width:4px;height:1.2px;background:#666"></div><svg style="left:1295px;top:943px" width="16" height="16"><g fill="none" stroke="#5d6672" stroke-width="0.9"><path d="M7 0.8 L13 3.3 L13 6.5 L7 9 L1 6.5 L1 3.3 Z M1 3.3 L7 5.6 L13 3.3 M7 5.6 V10.5"/><path d="M1 11.8 H4.5 M9.5 11.8 H13"/><rect x="4.3" y="10.6" width="5.4" height="2.2" rx="0.8"/></g></svg><div class="t" style="left:1334.79px;top:933.18px;font-size:14.20px;color:#1d1f22;letter-spacing:0.595px;">Compute</div><div class="t" style="left:1334.95px;top:951.79px;font-size:12.30px;color:#5b636c;letter-spacing:0.395px;">Other Compute</div><div class="t" style="left:1334.88px;top:967.69px;font-size:12.30px;color:#5b636c;letter-spacing:0.277px;">Generic Network Node</div><svg style="left:1485px;top:940px" width="22" height="12"><circle cx="2.7" cy="3" r="2" fill="none" stroke="#2f8af5" stroke-width="1.4"/><path d="M2.7 1 A2 2 0 0 1 2.7 5" fill="none" stroke="#1b2230" stroke-width="1.4"/><path d="M6 5.2 V2.4 Q6.5 1 8.4 1.2" fill="none" stroke="#1b2230" stroke-width="1.5"/><path d="M12.8 1.7 Q11.8 1 10.8 1.2 Q9 1.5 9 3 Q9 4.8 10.8 5 Q11.8 5 12.8 4.3" fill="none" stroke="#1b2230" stroke-width="1.4"/><circle cx="16.3" cy="3" r="1.9" fill="none" stroke="#1b2230" stroke-width="1.5"/><path d="M18.9 1 V5.3" stroke="#1b2230" stroke-width="1.4"/><path d="M7 7.8 H19.5" stroke="#8a9098" stroke-width="1.3" stroke-dasharray="1.3 0.5"/></svg><div class="t" style="left:1483.84px;top:963.73px;font-size:14.50px;color:#515a64;letter-spacing:-0.016px;">First Seen: 3 days ago</div><svg style="left:1636.7px;top:961.3px" width="19" height="19"><circle cx="9.7" cy="9.7" r="7.7" fill="none" stroke="#5a6370" stroke-width="1"/><rect x="9.10" y="5.46" width="1.20" height="1.10" fill="#5a6370"/><path d="M8.50 8.01 h1.20 v5.78 M8.30 13.93 h2.80" stroke="#5a6370" stroke-width="1.00" fill="none"/></svg><div class="t" style="left:1483.84px;top:984.73px;font-size:14.50px;color:#515a64;letter-spacing:-0.026px;">Last Seen: a day ago</div><div class="a" style="left:1686px;top:931px;width:97px;height:24px;background:#fff;border:1px solid #dfe3e8;border-left:4px solid #37474f;border-radius:4px"></div><div class="t" style="left:1696.71px;top:935.30px;font-size:13.00px;color:#333d47;letter-spacing:0.047px;-webkit-text-stroke:0.3px #333d47;">Orca Security</div><div class="a" style="left:298px;top:957px;width:1532px;height:2px;background:#f6f8fa"></div><div class="a" style="left:0px;top:0px;width:1832px;height:2px;background:#a6a6a6"></div><div class="a" style="left:0px;top:0px;width:2px;height:962px;background:#a6a6a6"></div><div class="a" style="left:1830px;top:0px;width:2px;height:962px;background:#a6a6a6"></div><div class="a" style="left:0px;top:959px;width:1832px;height:3px;background:#a6a6a6"></div>
</body></html>
